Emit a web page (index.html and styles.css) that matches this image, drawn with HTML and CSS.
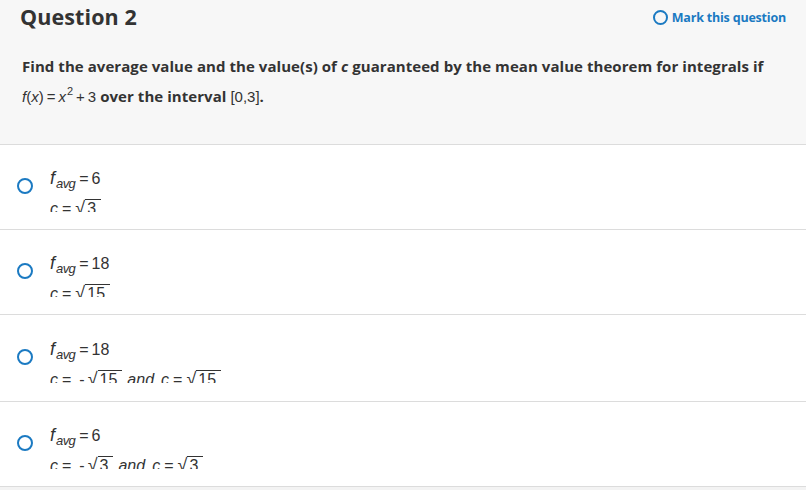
FILE: index.html
```html
<!DOCTYPE html>
<html>
<head>
<meta charset="utf-8">
<link rel="stylesheet" href="styles.css">
</head>
<body>
<div class="page">
  <div class="header">
    <div class="top">
      <h1 class="title">Question 2</h1>
      <a class="mark"><span class="mark-ring"></span>Mark this question</a>
    </div>
    <p class="prompt">Find the average value and the value(s) of <span class="mi">c</span> guaranteed by the mean value theorem for integrals if<br>
      <span class="m"><span class="mi">f</span>(<span class="mi">x</span>)<span class="op">=</span><span class="mi">x</span><sup>2</sup><span class="op">+</span>3</span> over the interval <span class="m">[0,3]</span>.</p>
  </div>

  <div class="option">
    <span class="radio"></span>
    <div class="math">
      <div class="ml"><span class="mf">f</span><sub class="sub">avg</sub><span class="op">=</span>6</div>
      <div class="ml"><span class="mc">c</span><span class="op">=</span><span class="rad">√</span><span class="under">3</span></div>
    </div>
  </div>

  <div class="option">
    <span class="radio"></span>
    <div class="math">
      <div class="ml"><span class="mf">f</span><sub class="sub">avg</sub><span class="op">=</span>18</div>
      <div class="ml"><span class="mc">c</span><span class="op">=</span><span class="rad">√</span><span class="under">15</span></div>
    </div>
  </div>

  <div class="option tall">
    <span class="radio"></span>
    <div class="math">
      <div class="ml"><span class="mf">f</span><sub class="sub">avg</sub><span class="op">=</span>18</div>
      <div class="ml"><span class="mc">c</span><span class="op">=</span><span class="neg">-</span><span class="rad">√</span><span class="under">15</span><span class="and">and</span><span class="mc">c</span><span class="op">=</span><span class="rad">√</span><span class="under">15</span></div>
    </div>
  </div>

  <div class="option">
    <span class="radio"></span>
    <div class="math">
      <div class="ml"><span class="mf">f</span><sub class="sub">avg</sub><span class="op">=</span>6</div>
      <div class="ml"><span class="mc">c</span><span class="op">=</span><span class="neg">-</span><span class="rad">√</span><span class="under">3</span><span class="and">and</span><span class="mc">c</span><span class="op">=</span><span class="rad">√</span><span class="under">3</span></div>
    </div>
  </div>
</div>
</body>
</html>
```

FILE: styles.css
```css
html, body {
  margin: 0;
  padding: 0;
  background: #f3f3f3;
}
.page {
  width: 806px;
  font-family: "Open Sans", "Liberation Sans", sans-serif;
  color: #333;
}
.header {
  background: #f7f7f7;
  border-bottom: 1px solid #dcdcdc;
  height: 145px;
  box-sizing: border-box;
  padding: 0 20px;
}
.top {
  display: flex;
  justify-content: space-between;
  align-items: center;
  height: 34px;
}
.title {
  margin: 0;
  font-size: 21.5px;
  font-weight: 700;
  line-height: 34px;
  letter-spacing: 0.1px;
}
.mark {
  display: flex;
  align-items: center;
  color: #1b7ac2;
  font-size: 12.5px;
  font-weight: 700;
  letter-spacing: -0.2px;
}
.mark-ring {
  width: 11px;
  height: 11px;
  border: 2px solid #1b7ac2;
  border-radius: 50%;
  margin-right: 4px;
}
.prompt {
  margin: 17px 0 0 2px;
  font-size: 15px;
  font-weight: 700;
  line-height: 30px;
  white-space: nowrap;
  letter-spacing: 0.06px;
}
.m {
  font-family: "Liberation Sans", sans-serif;
  font-weight: 400;
  font-size: 15px;
  letter-spacing: 0;
}
.prompt .mi {
  font-style: italic;
}
.m sup {
  font-size: 11px;
  vertical-align: 7px;
  line-height: 0;
  margin-left: 1px;
}
.m .op {
  padding: 0 3px;
}
.option {
  display: flex;
  align-items: flex-start;
  background: #fff;
  height: 85px;
  box-sizing: border-box;
  border-bottom: 1px solid #dcdcdc;
  padding-left: 17px;
}
.option.tall {
  height: 87px;
  padding-top: 1px;
}
.radio {
  flex: none;
  width: 12px;
  height: 12px;
  border: 2px solid #1b7ac2;
  border-radius: 50%;
  margin-top: 33px;
}
.math {
  margin-left: 17px;
  margin-top: 18px;
  height: 49px;
  overflow: hidden;
  font-family: "Liberation Sans", sans-serif;
  font-size: 16px;
  color: #333;
}
.ml {
  line-height: 30px;
  white-space: nowrap;
}
.math .op {
  padding: 0 3px 0 4px;
}
.mf {
  font-style: italic;
  font-size: 18px;
}
.sub {
  font-style: italic;
  font-size: 13px;
  vertical-align: -4px;
  line-height: 0;
  margin-left: 1px;
  letter-spacing: -0.6px;
}
.mc {
  font-style: italic;
}
.neg {
  padding: 0 2px 0 5px;
}
.rad {
  font-size: 18px;
  line-height: 0;
  padding-left: 1px;
}
.under {
  border-top: 1px solid #333;
  padding: 0 5px 0 2px;
}
.and {
  font-style: italic;
  margin: 0 7px 0 5px;
}
```
